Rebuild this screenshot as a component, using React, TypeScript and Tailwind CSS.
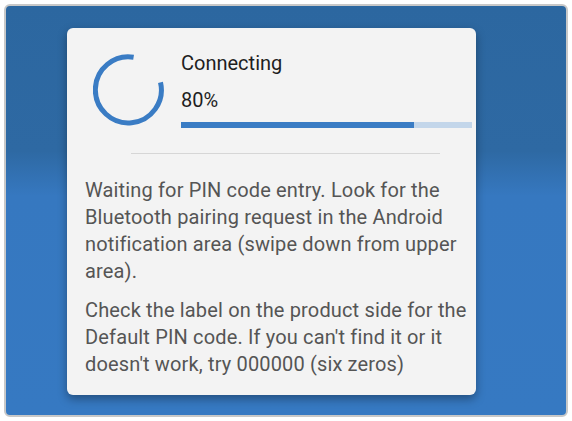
const Spinner = () => (
  <svg width="72" height="72" viewBox="0 0 72 72" className="shrink-0">
    <path
      d="M67.5 28.4 A33 33 0 1 1 40.6 3.3"
      fill="none"
      stroke="#3a7cc4"
      strokeWidth="5"
    />
  </svg>
);

const App = () => {
  const progress = 80;

  return (
    <div className="h-[421px] w-[572px] bg-white p-[4px] font-['Roboto',sans-serif]">
      <div className="h-[413px] w-[564px] overflow-hidden rounded-[6px] border-2 border-[#c8c8c8] bg-[linear-gradient(to_bottom,#2c67a0_0px,#2e69a3_145px,#3678c0_190px,#3679c2_100%)] pl-[61px] pt-[22px]">
        <div className="w-[409px] rounded-[6px] bg-[#f3f3f3] pb-[17px] pl-[18px] pt-[23px] shadow-[0_4px_10px_rgba(0,0,0,0.35)]">
          <div className="flex items-start">
            <div className="ml-[8px] mt-[3px]">
              <Spinner />
            </div>
            <div className="ml-[16px] flex flex-col">
              <p className="text-[20px] leading-[24px] text-[#1e1e1e]">Connecting</p>
              <p className="mt-[13px] text-[20px] leading-[24px] text-[#1e1e1e]">{progress}%</p>
              <div className="mt-[10px] h-[6px] w-[291px] bg-[#c3d6ea]">
                <div className="h-full bg-[#3a7cc4]" style={{ width: `${progress}%` }} />
              </div>
            </div>
          </div>
          <div className="ml-[46px] mt-[25px] h-px w-[309px] bg-[#d6d6d6]" />
          <div className="mt-[23px] w-[388px] text-[20px] leading-[27px] tracking-[0.15px] text-[#555555]">
            <p>
              Waiting for PIN code entry. Look for the Bluetooth pairing request in the Android
              notification area (swipe down from upper area).
            </p>
            <p className="mt-[12px]">
              Check the label on the product side for the Default PIN code. If you can't find it or
              it doesn't work, try 000000 (six zeros)
            </p>
          </div>
        </div>
      </div>
    </div>
  );
};

export default App;
